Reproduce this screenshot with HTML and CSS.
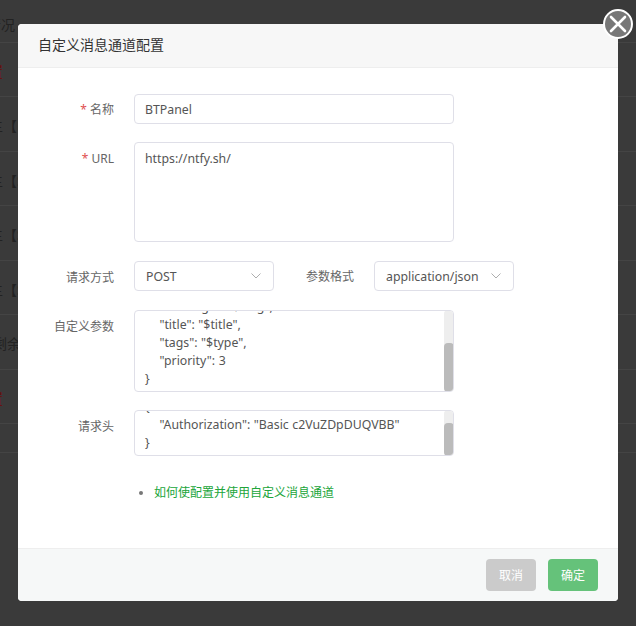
FILE: index.html
```html
<!DOCTYPE html>
<html lang="zh-CN">
  <head>
    <meta charset="UTF-8" />
    <title>自定义消息通道配置</title>
    <link rel="stylesheet" href="styles.css">
  </head>
  <body>
    <div class="page">
      <div class="row first">情况</div>
      <div class="row red">置</div>
      <div class="row">主【E</div>
      <div class="row">主【S</div>
      <div class="row">主【S</div>
      <div class="row">主【S</div>
      <div class="row remain">剩余天</div>
      <div class="row red">置</div>
      <div class="row last"></div>
    </div>

    <div class="modal">
      <button class="close" aria-label="关闭">
        <svg viewBox="0 0 24 24" width="24" height="24">
          <path d="M5 5L19 19M19 5L5 19" stroke="#fff" stroke-width="2.6" stroke-linecap="round" />
        </svg>
      </button>

      <div class="modal-title">自定义消息通道配置</div>

      <div class="modal-body">
        <div class="line">
          <label class="lbl lbl-high"><span class="req">*</span> 名称</label>
          <div class="field name-field">BTPanel</div>
        </div>

        <div class="line wide-gap">
          <label class="lbl"><span class="req">*</span> URL</label>
          <div class="field area url-area">https://ntfy.sh/</div>
        </div>

        <div class="line wide-gap">
          <label class="lbl">请求方式</label>
          <div class="field sel">
            POST
            <svg class="arrow" viewBox="0 0 10 6" width="10" height="6"><path d="M0.5 0.5L5 5L9.5 0.5" /></svg>
          </div>
          <label class="lbl lbl-second">参数格式</label>
          <div class="field sel">
            application/json
            <svg class="arrow" viewBox="0 0 10 6" width="10" height="6"><path d="M0.5 0.5L5 5L9.5 0.5" /></svg>
          </div>
        </div>

        <div class="line">
          <label class="lbl">自定义参数</label>
          <div class="field scroll params">
            <pre class="code">    "message": "$msg",
    "title": "$title",
    "tags": "$type",
    "priority": 3
}</pre>
            <div class="rail"><div class="thumb thumb-params"></div></div>
          </div>
        </div>

        <div class="line">
          <label class="lbl">请求头</label>
          <div class="field scroll headers">
            <pre class="code">{
    "Authorization": "Basic c2VuZDpDUQVBB"
}</pre>
            <div class="rail"><div class="thumb thumb-headers"></div></div>
          </div>
        </div>

        <ul class="tips">
          <li><a href="#">如何使配置并使用自定义消息通道</a></li>
        </ul>
      </div>

      <div class="modal-foot">
        <button class="btn cancel">取消</button>
        <button class="btn ok">确定</button>
      </div>
    </div>
  </body>
</html>
```

FILE: styles.css
```css
* {
  box-sizing: border-box;
}

body {
  margin: 0;
  height: 626px;
  overflow: hidden;
  background: #3a3a3a;
  font-family: "Noto Sans", "Noto Sans CJK SC", sans-serif;
  font-size: 12px;
  color: #666;
}

.page {
  padding-top: 7px;
}

.row {
  height: 54.5px;
  line-height: 57px;
  margin-left: -11px;
  color: #222;
  font-size: 14px;
  border-bottom: 1px solid #444;
  white-space: nowrap;
  overflow: hidden;
}

.row.first {
  height: 35.5px;
  line-height: 35px;
  margin-left: -13px;
}

.row.remain {
  margin-left: -7px;
}

.row.last {
  height: 29px;
}

.row.red {
  color: #6a0a0a;
}

.modal {
  position: absolute;
  left: 18px;
  top: 24px;
  width: 600px;
  height: 577px;
  background: #fff;
  border-radius: 4px;
  display: flex;
  flex-direction: column;
}

.close {
  position: absolute;
  right: -15px;
  top: -15px;
  width: 30px;
  height: 30px;
  padding: 0;
  border: 2px solid #fff;
  border-radius: 50%;
  background: #787878;
  display: flex;
  align-items: center;
  justify-content: center;
}

.modal-title {
  height: 44px;
  line-height: 42px;
  padding-left: 20px;
  background: #f7f7f7;
  border-bottom: 1px solid #eee;
  border-radius: 4px 4px 0 0;
  color: #333;
  font-size: 14px;
}

.modal-body {
  flex: 1;
  padding-top: 26px;
}

.line {
  display: flex;
  align-items: flex-start;
  margin-bottom: 18px;
}

.wide-gap {
  margin-bottom: 19px;
}

.lbl {
  width: 96px;
  height: 30px;
  text-align: right;
  line-height: 33px;
  flex-shrink: 0;
  color: #666;
}

.lbl-high {
  line-height: 31px;
}

.lbl-second {
  width: 80px;
  line-height: 31px;
}

.req {
  color: #e05050;
}

.field {
  margin-left: 20px;
  border: 1px solid #dfdfe8;
  border-radius: 4px;
  color: #555;
  background: #fff;
  font-size: 12.3px;
}

.name-field {
  width: 320px;
  height: 30px;
  line-height: 30px;
  padding-left: 10px;
}

.area {
  width: 320px;
}

.url-area {
  height: 100px;
  padding: 6px 10px;
  line-height: 20px;
}

.sel {
  position: relative;
  width: 140px;
  height: 30px;
  line-height: 30px;
  padding-left: 11px;
}

.arrow {
  position: absolute;
  right: 12px;
  top: 11px;
  fill: none;
  stroke: #999;
  stroke-width: 0.8;
}

.scroll {
  width: 320px;
  display: flex;
  justify-content: space-between;
  overflow: hidden;
}

.params {
  height: 82px;
}

.headers {
  height: 46px;
}

.code {
  margin: 0;
  padding: 0 0 3px 10px;
  align-self: flex-end;
  font-family: inherit;
  font-size: 12.3px;
  line-height: 18px;
  word-spacing: 0.4px;
  white-space: pre;
}

.rail {
  width: 10px;
  margin: -1px -1px -1px 0;
  background: #eee;
  border-radius: 4px;
  display: flex;
  align-items: flex-end;
}

.thumb {
  width: 100%;
  background: #bbb;
  border-radius: 4px;
}

.thumb-params {
  height: 49px;
}

.thumb-headers {
  height: 33px;
}

.tips {
  margin: 0;
  padding: 9px 0 0 136px;
  color: #777;
}

.tips a {
  color: #20a53a;
  text-decoration: none;
}

.modal-foot {
  height: 53px;
  background: #f6f8f8;
  border-top: 1px solid #eee;
  border-radius: 0 0 4px 4px;
  display: flex;
  justify-content: flex-end;
  align-items: center;
  gap: 12px;
  padding-right: 20px;
}

.btn {
  width: 50px;
  height: 32px;
  border: none;
  border-radius: 4px;
  padding: 0;
  color: #fff;
  font: inherit;
  font-size: 12px;
}

.cancel {
  background: #cbcbcb;
}

.ok {
  background: #65c27a;
}
```
